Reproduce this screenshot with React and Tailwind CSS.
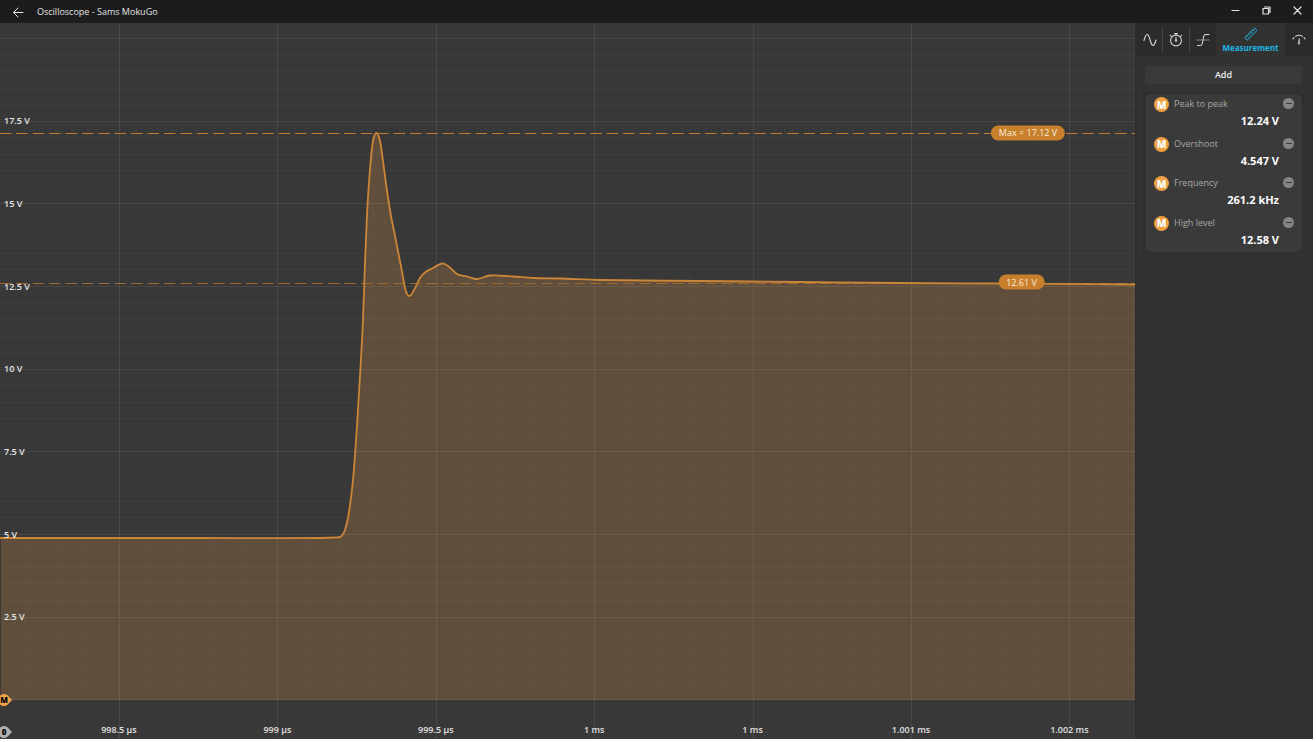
import React from "react";

const W = 1135;
const H = 716;

const trace = [
  [0, 515], [200, 515], [320, 515], [335, 514.5], [341, 513.5], [345, 507], [349, 489], [353, 457],
  [357, 403], [360, 353], [363, 297], [365, 240], [367, 192], [370, 146], [373, 118], [376.5, 110],
  [380, 118], [383, 138], [387, 168], [391, 193], [395, 213], [401.5, 246], [405.5, 267],
  [409.5, 273], [414, 267], [420, 255], [425, 249.5], [433, 245], [442, 240.5], [448, 243],
  [457, 251], [467, 253.5], [477, 256], [490, 252.5], [513, 253.5], [533, 255], [560, 255.5],
  [600, 257], [700, 258], [800, 259], [900, 260], [1000, 260.5], [1135, 261.5],
];

function smooth(points) {
  let d = `M${points[0][0]} ${points[0][1]}`;
  for (let i = 0; i < points.length - 1; i++) {
    const a = points[i - 1] || points[i];
    const b = points[i];
    const c = points[i + 1];
    const e = points[i + 2] || c;
    const k = (c[0] - b[0]) / 3;
    const s1 = c[0] - a[0] ? (c[1] - a[1]) / (c[0] - a[0]) : 0;
    const s2 = e[0] - b[0] ? (e[1] - b[1]) / (e[0] - b[0]) : 0;
    d += ` C${b[0] + k} ${b[1] + s1 * k} ${c[0] - k} ${c[1] - s2 * k} ${c[0]} ${c[1]}`;
  }
  return d;
}

const curve = smooth(trace);

const volts = ["17.5 V", "15 V", "12.5 V", "10 V", "7.5 V", "5 V", "2.5 V"].map((text, i) => ({
  text,
  y: 98.3 + i * 82.66,
}));

const times = ["998.5 µs", "999 µs", "999.5 µs", "1 ms", "1 ms", "1.001 ms", "1.002 ms"].map((text, i) => ({
  text,
  x: 119 + i * 158.4,
}));

const columns = Array.from({ length: 36 }, (_, i) => ({ x: Math.round(119 + (i - 3) * 31.68) + 0.5, major: (i - 3) % 5 === 0 }));
const rows = Array.from({ length: 43 }, (_, i) => ({ y: Math.round(15 + i * 16.53) + 0.5, major: i % 5 === 0 }));

const measurements = [
  ["Peak to peak", "12.24 V"],
  ["Overshoot", "4.547 V"],
  ["Frequency", "261.2 kHz"],
  ["High level", "12.58 V"],
];

const px = (x) => `${(x / W) * 100}%`;
const py = (y) => `${(y / H) * 100}%`;

function Marker({ y, letter, fill }) {
  return (
    <div className="absolute left-0 flex h-3 w-3 -translate-y-1/2 items-center" style={{ top: py(y) }}>
      <svg className="absolute inset-0 h-3 w-3" viewBox="0 0 12 12" aria-hidden="true">
        <path d="M-2 6A6 6 0 0 1 4 0C6.5 0 8.2 1.5 9.2 3L12 6L9.2 9C8.2 10.5 6.5 12 4 12A6 6 0 0 1-2 6Z" fill={fill} />
      </svg>
      <span className="relative flex w-2 justify-center text-[8px] leading-3 font-extrabold text-black">{letter}</span>
    </div>
  );
}

function Pill({ x, y, children }) {
  return (
    <div
      className="absolute flex h-[15px] -translate-x-1/2 -translate-y-1/2 items-center rounded-full bg-[#c8802d] px-2 text-[9px] leading-3 whitespace-nowrap text-[#fdeedb]"
      style={{ left: px(x), top: py(y) }}
    >
      {children}
    </div>
  );
}

function Chart() {
  return (
    <main className="relative min-w-0 flex-1 overflow-hidden bg-[#383838]">
      <svg className="absolute inset-0 h-full w-full" viewBox={`0 0 ${W} ${H}`} preserveAspectRatio="none" role="img" aria-label="Voltage over time">
        <path d={`${curve} L${W} 677 L1 677 L1 515 Z`} fill="#5f4e3b" />
        <g stroke="#ffffff" strokeWidth="1">
          {columns.map((c) => (
            <line key={c.x} x1={c.x} x2={c.x} y1="0" y2={H} strokeOpacity={c.major ? 0.08 : 0.025} />
          ))}
          {rows.map((r) => (
            <line key={r.y} x1="0" x2={W} y1={r.y} y2={r.y} strokeOpacity={r.major ? 0.07 : 0.03} />
          ))}
        </g>
        <path d="M0.5 515V677" stroke="#3d3a36" fill="none" />
        <path d={`M0 110.5H${W}`} stroke="#c47c2c" strokeWidth="1" strokeDasharray="11.4 5" fill="none" />
        <path d={`M0 260.5H${W}`} stroke="#a26a30" strokeWidth="1" strokeDasharray="11.4 5" fill="none" />
        <path d={curve} stroke="#cc8637" strokeWidth="1.8" strokeLinejoin="round" fill="none" />
      </svg>
      {volts.map((v) => (
        <span key={v.text} className="absolute left-1 -translate-y-1/2 text-[9px] leading-3 font-semibold text-[#e8e8e8]" style={{ top: py(v.y) }}>
          {v.text}
        </span>
      ))}
      {times.map((t, i) => (
        <span key={i} className="absolute bottom-[3px] -translate-x-1/2 text-[9px] leading-3 font-semibold whitespace-nowrap text-[#e0e0e0]" style={{ left: px(t.x) }}>
          {t.text}
        </span>
      ))}
      <Pill x={1028} y={109.5}>Max = 17.12 V</Pill>
      <Pill x={1021.5} y={259.5}>12.61 V</Pill>
      <Marker y={677} letter="M" fill="#f2a44a" />
      <Marker y={709} letter="0" fill="#b0b0b0" />
    </main>
  );
}

function Stroke({ className, box, width = 1.2, children }) {
  return (
    <svg className={className} viewBox={box} fill="none" stroke="currentColor" strokeWidth={width} strokeLinecap="round" strokeLinejoin="round" aria-hidden="true">
      {children}
    </svg>
  );
}

function Tabs() {
  return (
    <nav className="flex h-[33px] items-stretch bg-[#2b2b2b] text-[#d4d4d4]">
      <button type="button" aria-label="Channels" className="flex w-[25px] items-center justify-center">
        <Stroke className="h-4 w-4" box="0 0 16 16">
          <path d="M2 8.500C3 4.800 4 2.500 5.200 2.500C8 2.500 8.200 13.500 11 13.500C12.200 13.500 13.200 11 14 8" />
        </Stroke>
      </button>
      <button type="button" aria-label="Timebase" className="my-1 flex w-[28px] items-center justify-center border-x border-[#464646]">
        <Stroke className="h-4 w-4" box="0 0 16 16" width={1.1}>
          <circle cx="8" cy="8.500" r="5.400" />
          <path d="M6.500 1.500H9.500M8 1.500V3M2.200 3.300L3.200 4.200M13.800 3.300L12.800 4.200" />
          <path d="M8 5.300L8.800 9A0.800 0.800 0 0 1 7.200 9Z" fill="currentColor" strokeWidth="0.500" />
        </Stroke>
      </button>
      <button type="button" aria-label="Trigger" className="flex w-[26px] items-center justify-center">
        <Stroke className="h-4 w-4" box="0 0 16 16" width={1.1}>
          <path d="M2.500 13.500H5.500C6.800 13.500 7.100 12.500 7.300 11.500L8.700 4.500C8.900 3.300 9.500 2.500 10.700 2.500H14" />
          <path d="M2 8H14" strokeWidth="0.800" opacity="0.700" />
        </Stroke>
      </button>
      <button type="button" aria-current="page" className="flex w-[69px] flex-col items-center bg-[#323232] pt-1 text-[#1fb4e8]">
        <Stroke className="h-[14px] w-[14px]" box="0 0 14 14" width={1}>
          <path d="M1 10.600L10.600 1L13 3.400L3.400 13ZM3.300 8.800L4.300 9.800M5.200 6.900L5.900 7.600M7.100 5L8.100 6M9 3.100L9.700 3.800" />
        </Stroke>
        <span className="pt-px text-[8px] leading-3 font-bold">Measurement</span>
      </button>
      <button type="button" aria-label="Voltmeter" className="flex flex-1 items-center justify-center">
        <Stroke className="h-4 w-4" box="0 0 16 16" width={1.1}>
          <path d="M2 6.800L3 5.700M4.700 4.200C6.800 3 9.200 3 11.300 4.200M13 5.700L14 6.800" />
          <path d="M8.300 6.500L8.700 11.800A0.800 0.800 0 0 1 7.200 11.800Z" fill="currentColor" strokeWidth="0.500" />
        </Stroke>
      </button>
    </nav>
  );
}

export default function App() {
  return (
    <div className="h-screen bg-white pr-[3px] pb-[3px] font-['Open_Sans','Noto_Sans',sans-serif]">
      <div className="flex h-full flex-col bg-[#323232]">
        <header className="flex h-[23px] shrink-0 items-center bg-[#1c1c1c] pr-[10px] pl-3 text-[#e4e4e4]">
          <button type="button" aria-label="Back">
            <Stroke className="h-3 w-3" box="0 0 12 12" width={1}>
              <path d="M1.500 6.500H11M6 2L1.500 6.500L6 11" />
            </Stroke>
          </button>
          <h1 className="ml-[13px] flex-1 pt-px text-[9px] leading-4">Oscilloscope - Sams MokuGo</h1>
          <div className="flex items-center gap-5 pb-[2px]">
            <button type="button" aria-label="Minimize">
              <Stroke className="h-[11px] w-[11px]" box="0 0 11 11"><path d="M2 5.500H9" /></Stroke>
            </button>
            <button type="button" aria-label="Restore">
              <Stroke className="h-[11px] w-[11px]" box="0 0 11 11"><path d="M2 3.500H7.500V9H2ZM3.500 2H9V7.500" /></Stroke>
            </button>
            <button type="button" aria-label="Close">
              <Stroke className="h-[11px] w-[11px]" box="0 0 11 11"><path d="M2 2L9 9M9 2L2 9" /></Stroke>
            </button>
          </div>
        </header>
        <div className="flex min-h-0 flex-1">
          <Chart />
          <aside className="w-[178px] shrink-0 border-l-2 border-[#2e2e2e] bg-[#323232]">
            <Tabs />
            <div className="flex flex-col gap-[10px] pt-[10px] pr-[11px] pl-2">
              <button type="button" className="h-[18px] rounded-[3px] bg-[#3a3a3a] text-[9px] leading-3 font-semibold text-[#f0f0f0]">
                Add
              </button>
              <ul className="grid h-[158px] grid-rows-4 rounded-[5px] bg-[#3a3a3a] shadow-[0_0_3px_rgba(0,0,0,0.25)]">
                {measurements.map(([name, value]) => (
                  <li key={name} className="flex items-start pt-[3px] pr-2 pl-[9px]">
                    <span className="flex h-[15px] w-[15px] items-center justify-center rounded-full bg-[#f2a03f] text-[10px] leading-3 font-extrabold text-white">M</span>
                    <div className="ml-[5px] flex flex-1 flex-col">
                      <span className="text-[9px] leading-[14px] text-[#a8a8a8]">{name}</span>
                      <span className="pr-1 text-right text-[11px] leading-5 font-bold text-white">{value}</span>
                    </div>
                    <button type="button" aria-label={`Remove ${name}`} className="mt-px flex h-[11px] w-[11px] items-center justify-center rounded-full bg-[#858585]">
                      <span className="h-px w-[6px] bg-[#3a3a3a]" />
                    </button>
                  </li>
                ))}
              </ul>
            </div>
          </aside>
        </div>
      </div>
    </div>
  );
}
